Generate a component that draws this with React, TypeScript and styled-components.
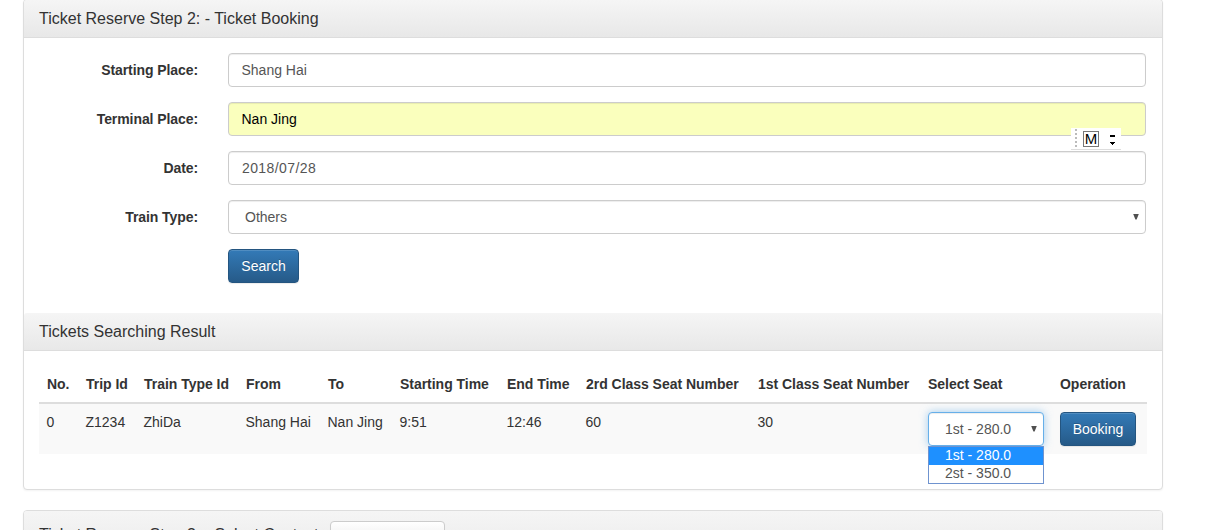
import React from 'react';
import styled, { createGlobalStyle, css } from 'styled-components';

const GlobalStyle = createGlobalStyle`
  *, *::before, *::after { box-sizing: border-box; }
  html { overflow: hidden; }
  body {
    margin: 0;
    height: 530px;
    overflow: hidden;
    background: #fff;
    color: #333;
    font: 14px/20px "Liberation Sans", Arial, sans-serif;
  }
`;

const Page = styled.main`
  position: relative;
  width: 1206px;
  height: 530px;
  overflow: hidden;
  padding-left: 23px;
`;

const Stack = styled.div`
  display: flex;
  flex-direction: column;
  gap: 20px;
  margin-top: -1px;
`;

const Panel = styled.section`
  width: 1140px;
  flex: none;
  border: 1px solid #ddd;
  border-radius: 4px;
  background: #fff;
  box-shadow: 0 1px 2px rgba(0, 0, 0, 0.05);
`;

const PanelHeading = styled.header`
  display: flex;
  align-items: center;
  min-height: 38px;
  padding: 0 15px;
  border-bottom: 1px solid #ddd;
  border-radius: 3px 3px 0 0;
  background: linear-gradient(#f5f5f5, #e8e8e8);
`;

const TallHeading = styled(PanelHeading)`
  height: 55px;
  align-items: flex-start;
  padding-top: 10px;
`;

const Title = styled.h3`
  margin: 0;
  font-size: 16px;
  font-weight: 400;
  line-height: 18px;
  white-space: nowrap;
`;

const StepTitle = styled(Title)`
  width: 291px;
  padding-top: 5px;
`;

const Form = styled.form`
  display: grid;
  row-gap: 15px;
  padding: 15px 16px 30px 15px;
`;

const FormRow = styled.div`
  display: grid;
  grid-template-columns: 159px 918px;
  column-gap: 30px;
`;

const Label = styled.label`
  padding-top: 7px;
  text-align: right;
  font-weight: 700;
  white-space: nowrap;
  letter-spacing: -0.08px;
`;

const control = css`
  width: 100%;
  height: 34px;
  border: 1px solid #ccc;
  border-radius: 4px;
  background: #fff;
  box-shadow: inset 0 1px 1px rgba(0, 0, 0, 0.075);
  color: #555;
  font: inherit;
`;

const Input = styled.input<{ $autofilled?: boolean; $spacing?: string }>`
  ${control}
  padding: 6px 12px 6px 12.5px;
  outline: none;
  letter-spacing: ${(p) => p.$spacing ?? '0'};
  ${(p) => p.$autofilled && css`
    background: #faffbd;
    color: #000;
  `}
`;

const DateInput = styled(Input)`
  padding-left: 13px;
`;

const SelectBox = styled.div<{ $focused?: boolean }>`
  ${control}
  display: flex;
  align-items: center;
  justify-content: space-between;
  padding: 0 6px 0 16px;
  ${(p) => p.$focused && css`
    border-color: #66afe9;
    box-shadow: inset 0 1px 1px rgba(0, 0, 0, 0.075), 0 0 8px rgba(102, 175, 233, 0.6);
  `}
`;

const Arrow = styled.span`
  width: 6px;
  height: 6px;
  margin-top: -1px;
  background: #505050;
  clip-path: polygon(0 0, 100% 0, 60% 100%, 40% 100%);
`;

const PrimaryButton = styled.button<{ $width: number }>`
  display: block;
  width: ${(p) => p.$width}px;
  height: 34px;
  padding: 0;
  border: 1px solid #245580;
  border-radius: 4px;
  background: linear-gradient(#337ab7, #265a88);
  box-shadow: inset 0 1px 0 rgba(255, 255, 255, 0.15), 0 1px 1px rgba(0, 0, 0, 0.075);
  color: #fff;
  font: inherit;
  text-shadow: 0 -1px 0 rgba(0, 0, 0, 0.2);
`;

const DefaultButton = styled.button`
  width: 115px;
  height: 34px;
  border: 1px solid #ccc;
  border-radius: 4px;
  background: linear-gradient(#fff, #e0e0e0);
  box-shadow: inset 0 1px 0 rgba(255, 255, 255, 0.15), 0 1px 1px rgba(0, 0, 0, 0.075);
`;

const TableArea = styled.div`
  padding: 15px 15px 35px;
`;

const Table = styled.table`
  width: 1108px;
  table-layout: fixed;
  border-collapse: separate;
  border-spacing: 0;
`;

const Th = styled.th`
  height: 38px;
  padding: 8px;
  border-bottom: 2px solid #ddd;
  text-align: left;
  white-space: nowrap;
  letter-spacing: -0.03px;
`;

const Td = styled.td<{ $control?: boolean }>`
  height: 50px;
  padding: 8px 8px 8px ${(p) => (p.$control ? '8px' : '7.5px')};
  background: #f9f9f9;
  vertical-align: top;
  white-space: nowrap;
`;

const SeatPicker = styled.div`
  position: relative;
  width: 116px;
`;

const Menu = styled.ul`
  position: absolute;
  top: 34px;
  left: 0;
  width: 116px;
  height: 38px;
  margin: 0;
  padding: 0;
  border: 1px solid #6f93cf;
  background: #fff;
  list-style: none;
`;

const MenuItem = styled.li<{ $active?: boolean }>`
  height: 18px;
  padding-left: 16px;
  line-height: 16px;
  color: ${(p) => (p.$active ? '#fff' : '#555')};
  background: ${(p) => (p.$active ? '#1e90ff' : '#fff')};
`;

const ImeBar = styled.aside`
  position: absolute;
  top: 128px;
  left: 1071px;
  display: flex;
  width: 50px;
  height: 22px;
  padding: 1px 0 0 4px;
  border-bottom: 1px solid #ddd;
  background: #fff;
`;

const Grip = styled.span`
  width: 2px;
  height: 20px;
  background: repeating-linear-gradient(#bbb 0 2px, #fff 2px 4px);
`;

const ImeMode = styled.span`
  display: flex;
  justify-content: center;
  width: 16px;
  height: 16px;
  margin: 2px 11px 0 6px;
  border: 1px solid #777;
  color: #000;
  font-size: 15px;
  line-height: 14px;
`;

const columns = [
  { title: 'No.', width: 39, value: '0' },
  { title: 'Trip Id', width: 58, value: 'Z1234' },
  { title: 'Train Type Id', width: 102, value: 'ZhiDa' },
  { title: 'From', width: 82, value: 'Shang Hai' },
  { title: 'To', width: 72, value: 'Nan Jing' },
  { title: 'Starting Time', width: 107, value: '9:51' },
  { title: 'End Time', width: 79, value: '12:46' },
  { title: '2rd Class Seat Number', width: 172, value: '60' },
  { title: '1st Class Seat Number', width: 170, value: '30' },
  { title: 'Select Seat', width: 132 },
  { title: 'Operation', width: 95 },
];

export default function App() {
  return (
    <Page>
      <GlobalStyle />
      <Stack>
        <Panel>
          <PanelHeading>
            <Title>Ticket Reserve Step 2: - Ticket Booking</Title>
          </PanelHeading>
          <Form>
            <FormRow>
              <Label>Starting Place:</Label>
              <Input defaultValue="Shang Hai" />
            </FormRow>
            <FormRow>
              <Label>Terminal Place:</Label>
              <Input $autofilled defaultValue="Nan Jing" />
            </FormRow>
            <FormRow>
              <Label>Date:</Label>
              <DateInput $spacing="0.4px" defaultValue="2018/07/28" />
            </FormRow>
            <FormRow>
              <Label>Train Type:</Label>
              <SelectBox>Others<Arrow /></SelectBox>
            </FormRow>
            <FormRow>
              <span />
              <PrimaryButton type="button" $width={71}>Search</PrimaryButton>
            </FormRow>
          </Form>
          <PanelHeading>
            <Title>Tickets Searching Result</Title>
          </PanelHeading>
          <TableArea>
            <Table>
              <colgroup>
                {columns.map((c) => <col key={c.title} width={c.width} />)}
              </colgroup>
              <thead>
                <tr>{columns.map((c) => <Th key={c.title}>{c.title}</Th>)}</tr>
              </thead>
              <tbody>
                <tr>
                  {columns.slice(0, 9).map((c) => <Td key={c.title}>{c.value}</Td>)}
                  <Td $control>
                    <SeatPicker>
                      <SelectBox $focused>1st - 280.0<Arrow /></SelectBox>
                      <Menu>
                        <MenuItem $active>1st - 280.0</MenuItem>
                        <MenuItem>2st - 350.0</MenuItem>
                      </Menu>
                    </SeatPicker>
                  </Td>
                  <Td $control>
                    <PrimaryButton type="button" $width={76}>Booking</PrimaryButton>
                  </Td>
                </tr>
              </tbody>
            </Table>
          </TableArea>
        </Panel>
        <Panel>
          <TallHeading>
            <StepTitle>Ticket Reserve Step 3: - Select Contact:</StepTitle>
            <DefaultButton type="button" />
          </TallHeading>
        </Panel>
      </Stack>
      <ImeBar>
        <Grip />
        <ImeMode>M</ImeMode>
        <svg width="6" height="20" viewBox="0 0 6 20" shapeRendering="crispEdges">
          <path d="M0 6h5v2H0zM0 13h5v1H0zM1 14h3v1H1zM2 15h1v1H2z" fill="#000" />
        </svg>
      </ImeBar>
    </Page>
  );
}
